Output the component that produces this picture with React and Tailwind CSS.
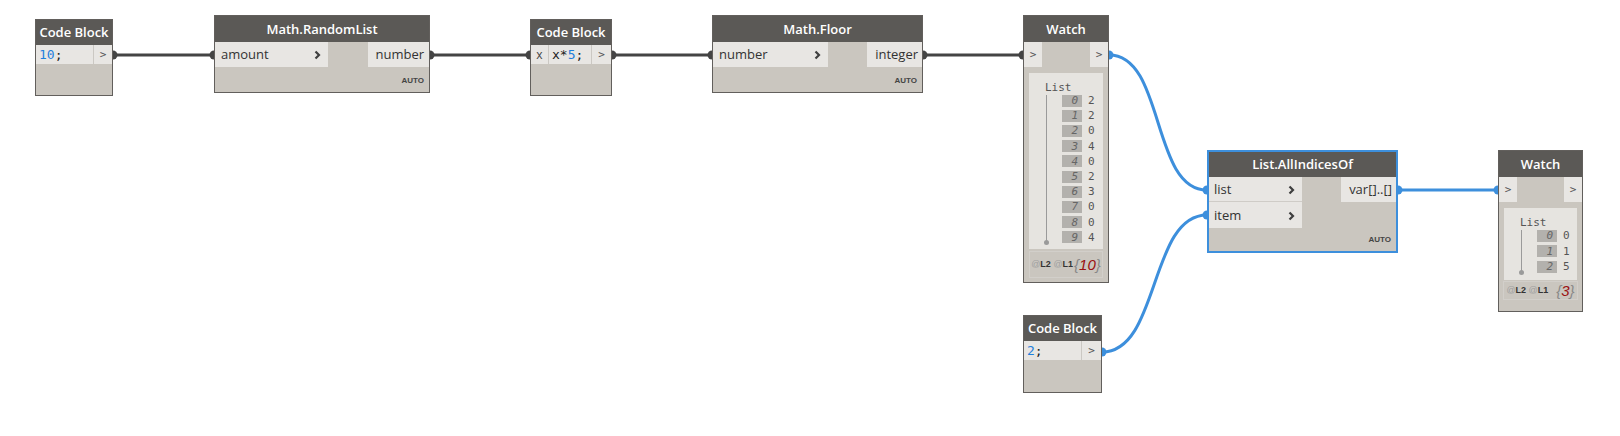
import React from "react";

const Chevron = () => (
  <svg width="7" height="10" viewBox="0 0 7 10" className="shrink-0">
    <polyline points="1.5,1.5 5,5 1.5,8.5" fill="none" stroke="#3f3f3f" strokeWidth="2.2" />
  </svg>
);

const Header = ({ children, h = "h-[26px]" }) => (
  <div className={`${h} shrink-0 bg-[#5b5956] text-white text-[13px] font-semibold flex items-center justify-center leading-none`}>
    {children}
  </div>
);

const Auto = () => (
  <div className="mt-auto self-end pr-[5px] pb-[7px] text-[8px] font-bold text-[#444] leading-none font-['Liberation_Sans',sans-serif]">AUTO</div>
);

const Gt = () => <span className="text-[11px] text-[#555] font-['DejaVu_Sans_Mono',monospace] leading-none">&gt;</span>;

const ListPanel = ({ items, className, rowH }) => (
  <div className={`bg-[#e6e4e0] ${className}`}>
    <div className="pl-[16px] text-[11px] leading-none text-[#555] font-['DejaVu_Sans_Mono',monospace]">List</div>
    <div className="flex">
      <div className="w-[33px] shrink-0 flex flex-col items-start pl-[16px] pt-[2px]">
        <div className="w-px flex-1 bg-[#9a9a9a] ml-[1px]" />
        <div className="w-[5px] h-[5px] rounded-full bg-[#9a9a9a] -ml-[1px] -mt-[2px]" />
      </div>
      <div className="flex flex-col">
        {items.map((v, i) => (
          <div key={i} className={`${rowH} flex items-center font-['DejaVu_Sans_Mono',monospace] text-[11px] leading-none`}>
            <div className="w-[20px] h-[12px] bg-[#b3b1ad] text-[#666] italic flex items-center justify-end pr-[4px]">{i}</div>
            <div className="pl-[6px] text-[#555]">{v}</div>
          </div>
        ))}
      </div>
    </div>
  </div>
);

const Footer = ({ count, className, gap }) => (
  <div className={`border border-[#d2cfca] flex items-center justify-center whitespace-nowrap ${className}`}>
    <span className="text-[9px] font-bold leading-none font-['Liberation_Sans',sans-serif] whitespace-nowrap">
      <span className="text-[#a0a0a0] font-normal">@</span><span className="text-[#333]">L2</span>{" "}
      <span className="text-[#a0a0a0] font-normal">@</span><span className="text-[#333]">L1</span>
    </span>
    <span className={`${gap} italic text-[15px] leading-none font-['Liberation_Sans',sans-serif]`}>
      <span className="text-[#888]">{"{"}</span><span className="text-[#9b1111]">{count}</span><span className="text-[#888]">{"}"}</span>
    </span>
  </div>
);

export default function App() {
  const dark = "#444444";
  const blue = "#3d8fdc";
  return (
    <div className="relative w-[1620px] h-[436px] bg-white overflow-hidden font-['Open_Sans',sans-serif]">
      <svg className="absolute inset-0 pointer-events-none" width="1620" height="436">
        <g stroke={dark} strokeWidth="3" fill="none">
          <line x1="113" y1="55" x2="214" y2="55" />
          <line x1="430" y1="55" x2="530" y2="55" />
          <line x1="612" y1="55" x2="712" y2="55" />
          <line x1="923" y1="55" x2="1023" y2="55" />
        </g>
        <g fill={dark}>
          {[113, 214, 430, 530, 612, 712, 923, 1023].map((x) => (
            <circle key={x} cx={x} cy="55" r="4.5" />
          ))}
        </g>
        <g stroke={blue} strokeWidth="3" fill="none">
          <path d="M1109 55 C1165 55 1151 190 1207 190" />
          <path d="M1102 352 C1160 352 1149 215 1207 215" />
          <line x1="1398" y1="190" x2="1498" y2="190" />
        </g>
        <g fill={blue}>
          <circle cx="1109" cy="55" r="4.5" />
          <circle cx="1207" cy="190" r="4.5" />
          <circle cx="1102" cy="352" r="4.5" />
          <circle cx="1207" cy="215" r="4.5" />
          <circle cx="1398" cy="190" r="4.5" />
          <circle cx="1498" cy="190" r="4.5" />
        </g>
      </svg>

      {/* Code Block 1 */}
      <div className="absolute left-[35px] top-[19px] w-[78px] h-[77px] border border-[#625f5c] bg-[#cac6bf] flex flex-col">
        <Header h="h-[25px]">Code Block</Header>
        <div className="h-[19px] flex bg-[#e8e6e3]">
          <div className="flex-1 pl-[3px] flex items-center text-[13px] leading-none font-['DejaVu_Sans_Mono',monospace]">
            <span className="text-[#1f7fdc]">10</span><span className="text-[#222]">;</span>
          </div>
          <div className="w-[19px] border-l border-[#cbc8c3] flex items-center justify-center"><Gt /></div>
        </div>
      </div>

      {/* Math.RandomList */}
      <div className="absolute left-[214px] top-[15px] w-[216px] h-[78px] border border-[#625f5c] bg-[#cac6bf] flex flex-col">
        <Header>Math.RandomList</Header>
        <div className="h-[25px] flex">
          <div className="w-[113px] bg-[#e8e6e3] flex items-center justify-between pl-[6px] pr-[7px] pt-[1px] text-[13px] text-[#333]">
            <span>amount</span><Chevron />
          </div>
          <div className="flex-1" />
          <div className="w-[61px] bg-[#e8e6e3] flex items-center justify-end pr-[5px] pt-[1px] text-[13px] text-[#333]">number</div>
        </div>
        <Auto />
      </div>

      {/* Code Block 2 */}
      <div className="absolute left-[530px] top-[19px] w-[82px] h-[77px] border border-[#625f5c] bg-[#cac6bf] flex flex-col">
        <Header h="h-[25px]">Code Block</Header>
        <div className="h-[19px] flex bg-[#e8e6e3]">
          <div className="w-[18px] border-r border-[#cbc8c3] flex items-center justify-center text-[12px] text-[#444] leading-none">x</div>
          <div className="flex-1 pl-[3px] flex items-center text-[13px] leading-none font-['DejaVu_Sans_Mono',monospace]">
            <span className="text-[#222]">x*</span><span className="text-[#1f7fdc]">5</span><span className="text-[#222]">;</span>
          </div>
          <div className="w-[20px] border-l border-[#cbc8c3] flex items-center justify-center"><Gt /></div>
        </div>
      </div>

      {/* Math.Floor */}
      <div className="absolute left-[712px] top-[15px] w-[211px] h-[78px] border border-[#625f5c] bg-[#cac6bf] flex flex-col">
        <Header>Math.Floor</Header>
        <div className="h-[25px] flex">
          <div className="w-[115px] bg-[#e8e6e3] flex items-center justify-between pl-[6px] pr-[7px] pt-[1px] text-[13px] text-[#333]">
            <span>number</span><Chevron />
          </div>
          <div className="flex-1" />
          <div className="w-[55px] bg-[#e8e6e3] flex items-center justify-end pr-[4px] pt-[1px] text-[13px] text-[#333]">integer</div>
        </div>
        <Auto />
      </div>

      {/* Watch 1 */}
      <div className="absolute left-[1023px] top-[15px] w-[86px] h-[268px] border border-[#625f5c] bg-[#cac6bf] flex flex-col">
        <Header>Watch</Header>
        <div className="h-[25px] flex justify-between">
          <div className="w-[18px] bg-[#e8e6e3] flex items-center justify-center"><Gt /></div>
          <div className="w-[18px] bg-[#e8e6e3] flex items-center justify-center"><Gt /></div>
        </div>
        <ListPanel
          items={[2, 2, 0, 4, 0, 2, 3, 0, 0, 4]}
          className="mx-[5px] mt-[6px] h-[176px] pt-[9px]"
          rowH="h-[15.2px]"
        />
        <Footer count="10" className="mx-[5px] mt-[2px] h-[27px]" gap="ml-[1px]" />
      </div>

      {/* List.AllIndicesOf */}
      <div className="absolute left-[1207px] top-[150px] w-[191px] h-[103px] border-2 border-[#3d8fdc] bg-[#cac6bf] flex flex-col">
        <Header h="h-[25px]">List.AllIndicesOf</Header>
        <div className="flex">
          <div className="w-[93px] flex flex-col">
            <div className="h-[25px] bg-[#e8e6e3] border-b border-[#cfccc7] flex items-center justify-between pl-[5px] pr-[7px] pt-[1px] text-[13px] text-[#333]">
              <span>list</span><Chevron />
            </div>
            <div className="h-[26px] bg-[#e8e6e3] flex items-center justify-between pl-[5px] pr-[7px] pt-[1px] text-[13px] text-[#333]">
              <span>item</span><Chevron />
            </div>
          </div>
          <div className="flex-1" />
          <div className="w-[55px] h-[25px] bg-[#e8e6e3] flex items-center justify-end pr-[4px] pt-[1px] text-[13px] text-[#333]">var[]..[]</div>
        </div>
        <Auto />
      </div>

      {/* Watch 2 */}
      <div className="absolute left-[1498px] top-[150px] w-[85px] h-[162px] border border-[#625f5c] bg-[#cac6bf] flex flex-col">
        <Header>Watch</Header>
        <div className="h-[25px] flex justify-between">
          <div className="w-[18px] bg-[#e8e6e3] flex items-center justify-center"><Gt /></div>
          <div className="w-[18px] bg-[#e8e6e3] flex items-center justify-center"><Gt /></div>
        </div>
        <ListPanel
          items={[0, 1, 5]}
          className="mx-[5px] mt-[6px] h-[72px] pt-[9px]"
          rowH="h-[15.5px]"
        />
        <Footer count="3" className="mx-[4px] mt-[1px] h-[19px]" gap="ml-[8px]" />
      </div>

      {/* Code Block 3 */}
      <div className="absolute left-[1023px] top-[315px] w-[79px] h-[78px] border border-[#625f5c] bg-[#cac6bf] flex flex-col">
        <Header h="h-[25px]">Code Block</Header>
        <div className="h-[19px] flex bg-[#e8e6e3]">
          <div className="flex-1 pl-[3px] flex items-center text-[13px] leading-none font-['DejaVu_Sans_Mono',monospace]">
            <span className="text-[#1f7fdc]">2</span><span className="text-[#222]">;</span>
          </div>
          <div className="w-[20px] border-l border-[#cbc8c3] flex items-center justify-center"><Gt /></div>
        </div>
      </div>
    </div>
  );
}
